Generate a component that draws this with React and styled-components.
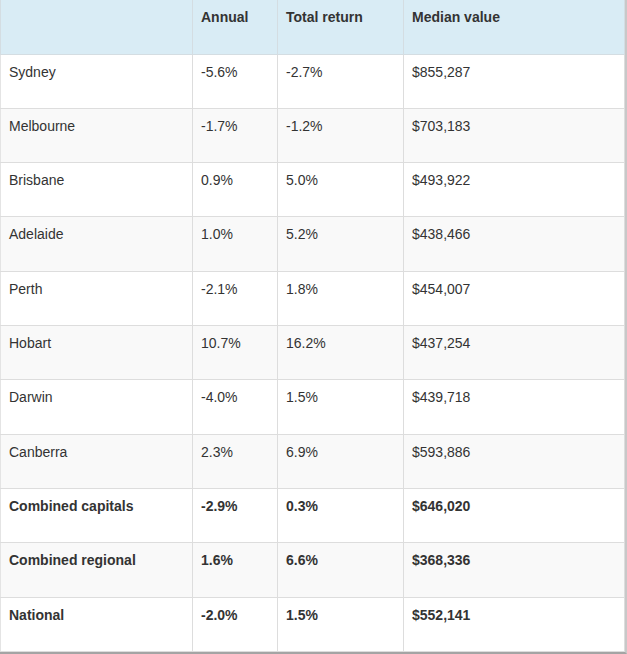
import React from 'react';
import styled, { createGlobalStyle } from 'styled-components';

const Global = createGlobalStyle`
  html, body { margin: 0; padding: 0; background: #fff; }
  body { font-family: Arial, "Liberation Sans", sans-serif; }
`;

const Wrap = styled.div`
  width: 627px;
  height: 654px;
  box-sizing: border-box;
  border-right: 2px solid #c8c8c8;
  border-bottom: 2px solid #a4a4a4;
  overflow: hidden;
`;

const Table = styled.table`
  width: 625px;
  height: 652px;
  border-collapse: collapse;
  table-layout: fixed;
  font-size: 14px;
  color: #333;
`;

const HeadCell = styled.th`
  background: #d9ecf5;
  text-align: left;
  vertical-align: top;
  font-weight: bold;
  padding: 8px 8px;
  line-height: 18px;
  border: 1px solid #d4dde2;
  border-top: none;
`;

const Row = styled.tr`
  background: ${p => (p.$alt ? '#f9f9f9' : '#fff')};
  height: 54.3px;
`;

const Cell = styled.td`
  vertical-align: top;
  padding: 8px 8px;
  line-height: 18px;
  font-weight: ${p => (p.$bold ? 'bold' : 'normal')};
  border: 1px solid #ddd;
  &:first-child { border-left: 1px solid #e4e4e4; }
`;

const rows = [
  ['Sydney', '-5.6%', '-2.7%', '$855,287'],
  ['Melbourne', '-1.7%', '-1.2%', '$703,183'],
  ['Brisbane', '0.9%', '5.0%', '$493,922'],
  ['Adelaide', '1.0%', '5.2%', '$438,466'],
  ['Perth', '-2.1%', '1.8%', '$454,007'],
  ['Hobart', '10.7%', '16.2%', '$437,254'],
  ['Darwin', '-4.0%', '1.5%', '$439,718'],
  ['Canberra', '2.3%', '6.9%', '$593,886'],
  ['Combined capitals', '-2.9%', '0.3%', '$646,020', true],
  ['Combined regional', '1.6%', '6.6%', '$368,336', true],
  ['National', '-2.0%', '1.5%', '$552,141', true],
];

export default function App() {
  return (
    <>
      <Global />
      <Wrap>
        <Table>
          <colgroup>
            <col style={{ width: 192 }} />
            <col style={{ width: 85 }} />
            <col style={{ width: 126 }} />
            <col />
          </colgroup>
          <thead>
            <tr style={{ height: 54 }}>
              <HeadCell></HeadCell>
              <HeadCell>Annual</HeadCell>
              <HeadCell>Total return</HeadCell>
              <HeadCell>Median value</HeadCell>
            </tr>
          </thead>
          <tbody>
            {rows.map((r, i) => (
              <Row key={r[0]} $alt={i % 2 === 1}>
                {r.slice(0, 4).map((c, j) => (
                  <Cell key={j} $bold={r[4]}>{c}</Cell>
                ))}
              </Row>
            ))}
          </tbody>
        </Table>
      </Wrap>
    </>
  );
}
